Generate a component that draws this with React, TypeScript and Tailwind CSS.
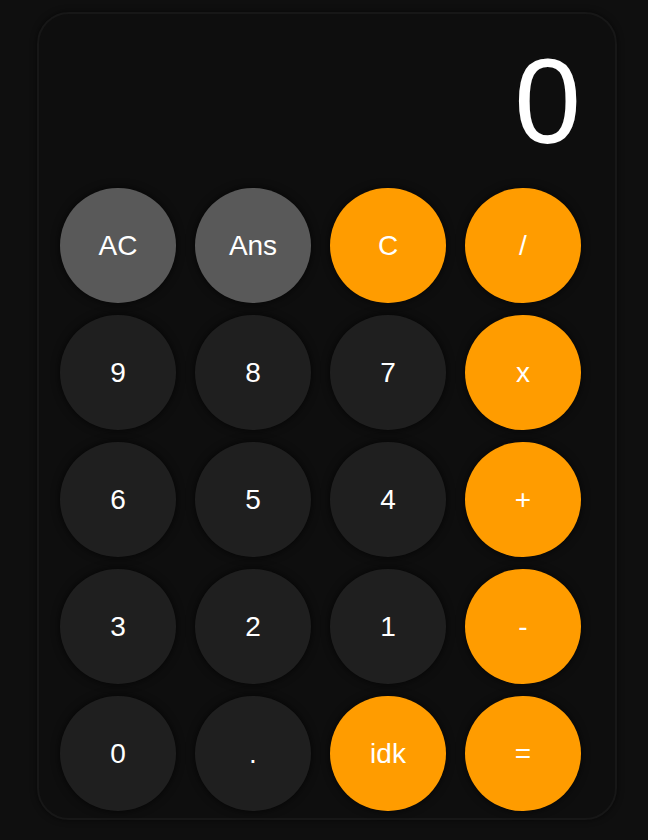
const keys: { k: string; c: "gray" | "dark" | "orange" }[] = [
  { k: "AC", c: "gray" },
  { k: "Ans", c: "gray" },
  { k: "C", c: "orange" },
  { k: "/", c: "orange" },
  { k: "9", c: "dark" },
  { k: "8", c: "dark" },
  { k: "7", c: "dark" },
  { k: "x", c: "orange" },
  { k: "6", c: "dark" },
  { k: "5", c: "dark" },
  { k: "4", c: "dark" },
  { k: "+", c: "orange" },
  { k: "3", c: "dark" },
  { k: "2", c: "dark" },
  { k: "1", c: "dark" },
  { k: "-", c: "orange" },
  { k: "0", c: "dark" },
  { k: ".", c: "dark" },
  { k: "idk", c: "orange" },
  { k: "=", c: "orange" },
];

const colors = {
  gray: "bg-[#595959]",
  dark: "bg-[#1f1f1f]",
  orange: "bg-[#ff9c00]",
};

export default function App() {
  return (
    <div className="min-h-screen bg-[#0f0f0f] pt-[12px] font-['Liberation_Sans',Arial,sans-serif] text-white">
      <div className="ml-[37px] w-[580px] h-[808px] rounded-[32px] border-2 border-[#171717] bg-[#0e0e0e] pl-[21px] pt-[27px] shadow-[0_0_6px_rgba(0,0,0,0.6)]">
        <div className="w-[521px]">
          <div className="flex justify-end text-[120px] leading-none h-[120px]">0</div>
          <div className="mt-[27px] grid grid-cols-[repeat(4,116px)] gap-x-[19px] gap-y-[12px]">
            {keys.map((b) => (
              <button
                key={b.k}
                className={`${colors[b.c]} h-[115px] w-[116px] rounded-full text-[28px] text-white flex items-center justify-center shadow-[0_0_8px_rgba(0,0,0,0.7)]`}
              >
                {b.k}
              </button>
            ))}
          </div>
        </div>
      </div>
    </div>
  );
}
